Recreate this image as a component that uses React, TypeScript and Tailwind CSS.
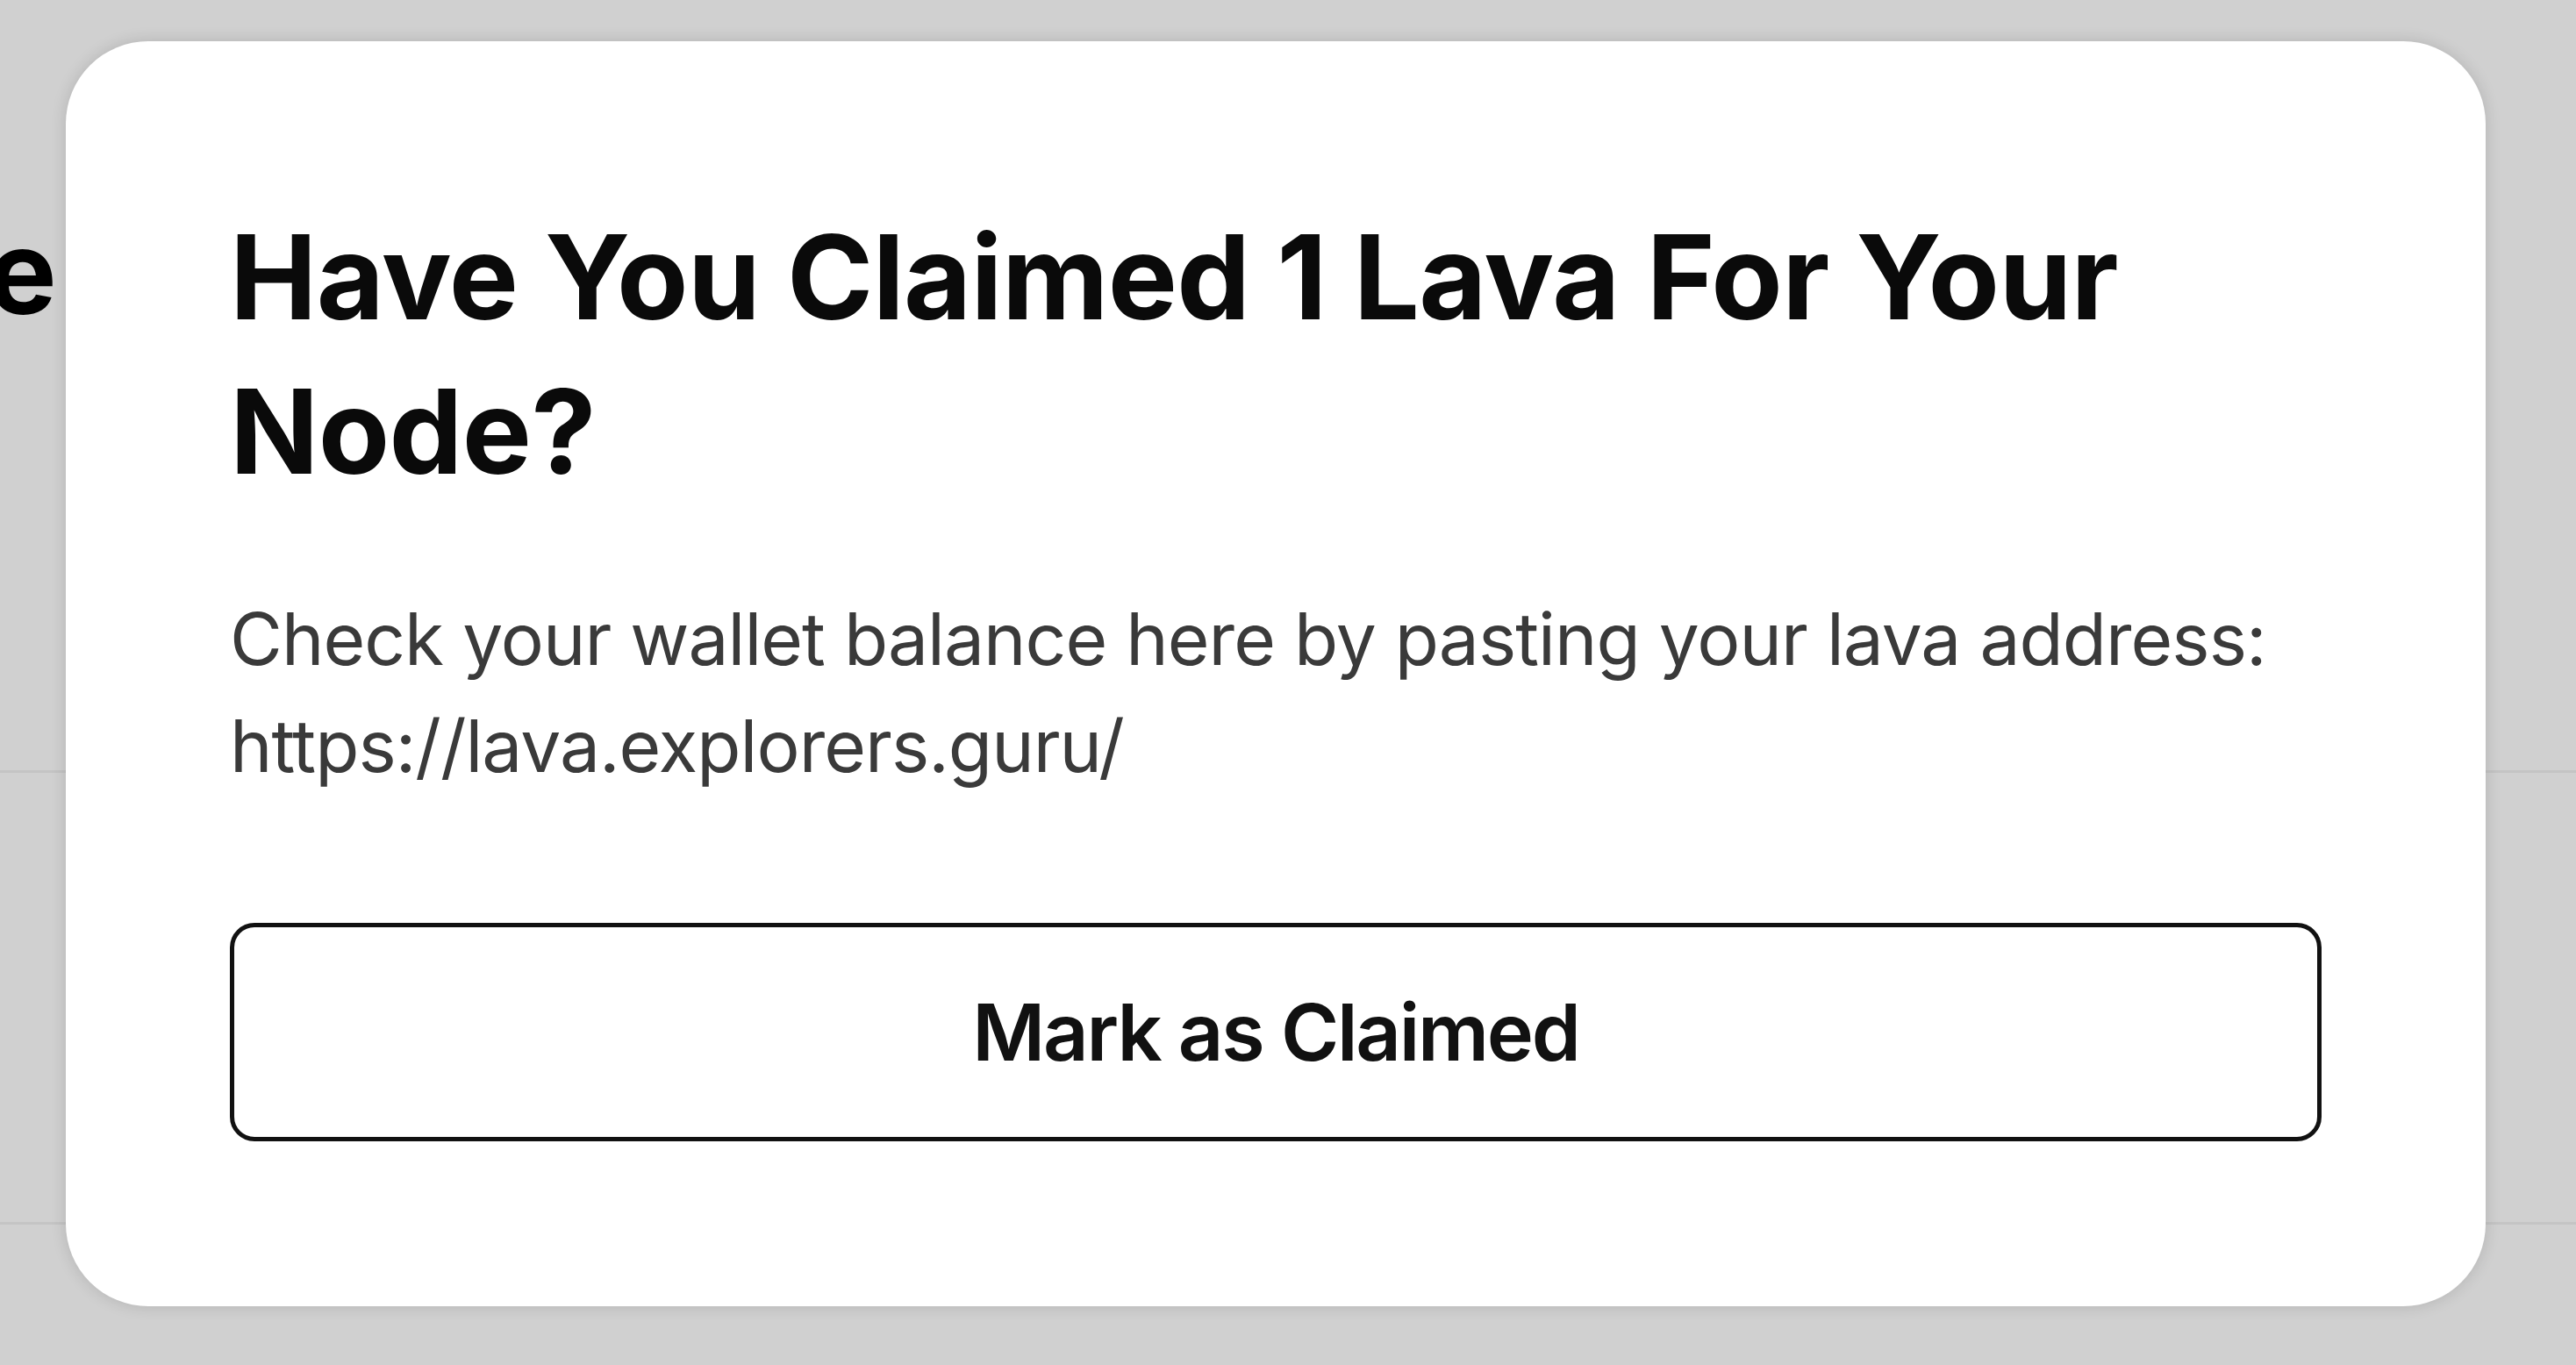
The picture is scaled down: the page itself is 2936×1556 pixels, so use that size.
const FONT = "font-['Inter','Liberation_Sans',sans-serif]";

function PageBehind() {
  // what peeks out around the dialog: the tail of a heading and two row dividers
  return (
    <div className="flex flex-col h-full">
      <div className="h-[222px]" />
      <div className="w-[62px] overflow-hidden flex justify-end">
        <span className="whitespace-nowrap text-[133px] leading-[176px] font-bold text-black tracking-[-0.02em]">
          Validator Node
        </span>
      </div>
      <div className="h-[480px]" />
      <div className="h-[3px] bg-[#c4c4c4]" />
      <div className="h-[512px]" />
      <div className="h-[3px] bg-[#c4c4c4]" />
    </div>
  );
}

function ClaimDialog() {
  return (
    <div className="bg-white rounded-[94px] px-[187px] pt-[181px] pb-[188px] shadow-[0_0_18px_rgba(0,0,0,0.14)]">
      <h1 className="text-[133px] leading-[176px] font-bold text-[#0a0a0a] tracking-[-0.005em]">
        Have You Claimed 1 Lava For Your Node?
      </h1>
      <p className="mt-[88px] text-[82px] leading-[122px] text-[#3a3a3a] tracking-[-0.012em]">
        Check your wallet balance here by pasting your lava address:
        <br />
        https://lava.explorers.guru/
      </p>
      <button className="mt-[140px] w-full h-[249px] border-[5px] border-[#111111] rounded-[28px] bg-white text-[90px] font-semibold text-[#111111] tracking-[-0.025em]">
        Mark as Claimed
      </button>
    </div>
  );
}

export default function App() {
  return (
    <div className={`${FONT} relative w-[2936px] h-[1556px] overflow-hidden bg-[#d0d0d0]`}>
      <PageBehind />
      {/* dim overlay + dialog on top of the page */}
      <div className="absolute inset-0 pl-[75px] pr-[103px] pt-[47px]">
        <ClaimDialog />
      </div>
    </div>
  );
}
